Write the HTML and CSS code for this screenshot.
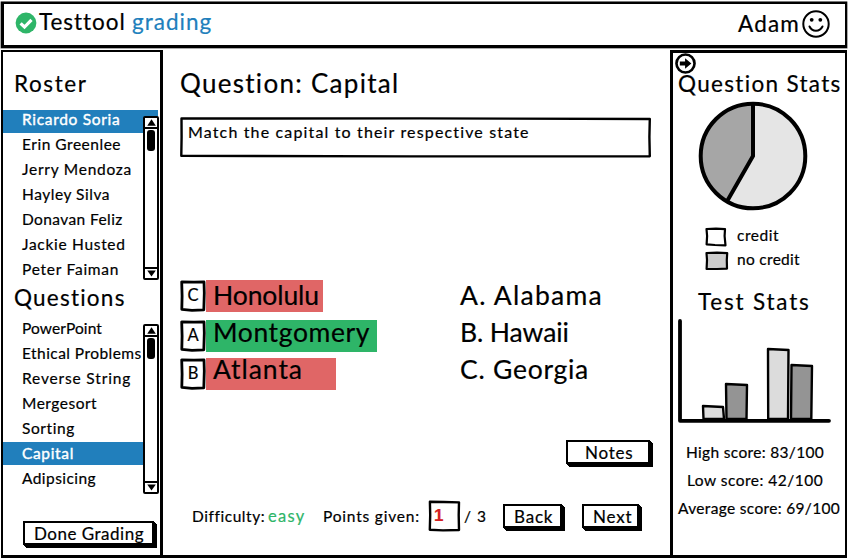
FILE: index.html
```html
<!DOCTYPE html>
<html lang="en">
<head>
<meta charset="utf-8">
<title>Testtool grading</title>
<link rel="stylesheet" href="styles.css">
</head>
<body>
<header class="topbar">
  <div class="brand">
    <svg class="check" viewBox="0 0 22 22"><circle cx="11" cy="11" r="10.4" fill="#2eb568"/><path d="M5.6 11.3 9.5 15l7-7.2" fill="none" stroke="#fff" stroke-width="3.2"/></svg>
    <span class="name">Testtool</span>
    <span class="mode">grading</span>
  </div>
  <div class="user">
    <span>Adam</span>
    <svg class="smiley" viewBox="0 0 28 28"><circle cx="14" cy="14" r="12.7" fill="none" stroke="#000" stroke-width="2"/><circle cx="9.7" cy="9.8" r="1.9"/><circle cx="18.3" cy="9.8" r="1.9"/><path d="M7.5 16.5c2.6 5.6 10.2 5.6 13 0" fill="none" stroke="#000" stroke-width="2" stroke-linecap="round"/></svg>
  </div>
</header>

<div class="columns">
  <aside class="sidebar">
    <h2 class="roster-title">Roster</h2>
    <div class="list roster">
      <ul>
        <li class="selected">Ricardo Soria</li>
        <li>Erin Greenlee</li>
        <li>Jerry Mendoza</li>
        <li>Hayley Silva</li>
        <li>Donavan Feliz</li>
        <li>Jackie Husted</li>
        <li>Peter Faiman</li>
      </ul>
      <div class="scrollbar">
        <svg class="arrow" viewBox="0 0 11 10"><path d="M5.5 1.5 10.3 8.6H.8z"/></svg>
        <div class="track"><div class="thumb"></div></div>
        <svg class="arrow down" viewBox="0 0 11 10"><path d="M5.5 8.4.8 1.8h9.5z"/></svg>
      </div>
    </div>
    <h2 class="questions-title">Questions</h2>
    <div class="list questions">
      <ul>
        <li>PowerPoint</li>
        <li>Ethical Problems</li>
        <li>Reverse String</li>
        <li>Mergesort</li>
        <li>Sorting</li>
        <li class="selected">Capital</li>
        <li>Adipsicing</li>
      </ul>
      <div class="scrollbar">
        <svg class="arrow" viewBox="0 0 11 10"><path d="M5.5 1.5 10.3 8.6H.8z"/></svg>
        <div class="track"><div class="thumb"></div></div>
        <svg class="arrow down" viewBox="0 0 11 10"><path d="M5.5 8.4.8 1.8h9.5z"/></svg>
      </div>
    </div>
    <button class="btn done">Done Grading</button>
  </aside>

  <main class="work">
    <h1>Question: Capital</h1>
    <div class="prompt">Match the capital to their respective state
      <svg class="sketch" viewBox="0 0 471 41" preserveAspectRatio="none"><path d="M1.5 1.5 240 1.4 469.8 2 469.4 20 469.8 39.3 230 39.4 1.3 38.8 1.6 20z"/></svg>
    </div>
    <div class="matching">
      <div class="answers">
        <div class="answer wrong honolulu">
          <span class="pick">C<svg class="sketch" viewBox="0 0 26 32"><path d="M1.7 1.8 14 2.2 24 2 24.3 13 23.8 29.8 12 30.3 1.8 29.4 2.1 16z"/></svg></span>
          <span class="city">Honolulu</span>
        </div>
        <div class="answer right montgomery">
          <span class="pick">A<svg class="sketch" viewBox="0 0 26 32"><path d="M1.7 1.8 14 2.2 24 2 24.3 13 23.8 29.8 12 30.3 1.8 29.4 2.1 16z"/></svg></span>
          <span class="city">Montgomery</span>
        </div>
        <div class="answer wrong atlanta">
          <span class="pick">B<svg class="sketch" viewBox="0 0 26 32"><path d="M1.7 1.8 14 2.2 24 2 24.3 13 23.8 29.8 12 30.3 1.8 29.4 2.1 16z"/></svg></span>
          <span class="city">Atlanta</span>
        </div>
      </div>
      <div class="states">
        <div>A. Alabama</div>
        <div>B. Hawaii</div>
        <div>C. Georgia</div>
      </div>
    </div>
    <button class="btn notes">Notes</button>
    <div class="controls">
      <span class="difficulty">Difficulty:</span>
      <span class="easy">easy</span>
      <span class="points">Points given:</span>
      <span class="score">1<svg class="sketch" viewBox="0 0 33 32"><path d="M1.9 1.8 16 2 31 2.4 30.7 15 31 30 15 30.4 1.8 29.8 2.2 15z"/></svg></span>
      <span class="max">/ 3</span>
      <button class="btn back">Back</button>
      <button class="btn next">Next</button>
    </div>
  </main>

  <aside class="stats">
    <svg class="expand" viewBox="0 0 20 20"><circle cx="10" cy="10" r="8.6" fill="none" stroke="#000" stroke-width="2.5"/><path d="M4.6 8.2h5V5L15.6 10 9.6 15v-3.2h-5z"/></svg>
    <h2 class="qstats">Question Stats</h2>
    <svg class="pie" viewBox="0 0 110 110">
      <circle cx="55" cy="55" r="52.3" fill="#e5e5e5"/>
      <path d="M55 55V2.7A52.3 52.3 0 0 0 28.8 100.3z" fill="#a6a6a6"/>
      <path d="M55 3V55L29.5 99.5" fill="none" stroke="#000" stroke-width="4"/>
      <circle cx="55" cy="55" r="52.3" fill="none" stroke="#000" stroke-width="4"/>
    </svg>
    <div class="legend">
      <svg viewBox="0 0 24 20"><path d="M1.5 2 11 1.6 20 2.2 19.6 9 20.5 18.4 10 18 1.6 17.4 2.1 9z" fill="#fff"/></svg><span class="credit">credit</span>
      <svg viewBox="0 0 24 20"><path d="M1.5 2 12 1.7 22.2 2.2 21.8 9 22 17.6 12 18 1.6 18 2 9z" fill="#ccc"/></svg><span class="nocredit">no credit</span>
    </div>
    <h2 class="tstats">Test Stats</h2>
    <svg class="bars" viewBox="0 0 154 105">
      <g stroke="#000" stroke-width="2.4" stroke-linejoin="round">
        <path d="M25 88 45 89 46 101H25.5z" fill="#dcdcdc"/>
        <path d="M48 66 69 67 68.5 101H48.5z" fill="#949494"/>
        <path d="M90 31 110.5 32 110 101H90.2z" fill="#dcdcdc"/>
        <path d="M113.5 47 134 48 133.3 101H113z" fill="#949494"/>
      </g>
      <path d="M2 3V102.8H151" fill="none" stroke="#000" stroke-width="3.8" stroke-linecap="round" stroke-linejoin="round"/>
    </svg>
    <div class="totals">
      <div class="high">High score: 83/100</div>
      <div class="low">Low score: 42/100</div>
      <div class="average">Average score: 69/100</div>
    </div>
  </aside>
</div>
</body>
</html>
```
FILE: styles.css
```css
* { box-sizing: border-box; }

body {
  margin: 0;
  padding: 2px 1px 0;
  height: 559px;
  overflow: hidden;
  background: #fff;
  color: #000;
  font: 15.5px/20px Lato, "Open Sans", sans-serif;
  font-kerning: normal;
  white-space: nowrap;
  -webkit-text-stroke: 0.2px currentColor;
}

h1, h2, ul { margin: 0; padding: 0; font-weight: 400; }
h2 { font-size: 22.5px; line-height: 28px; }
svg { display: block; flex: none; }

.topbar {
  height: 46px;
  border: 2px solid #000;
  border-width: 2px 2px 3px 3px;
  box-shadow: 0 -1px #777, 0 0 0 0.5px #555;
  display: flex;
  justify-content: space-between;
  font-size: 22.5px;
  line-height: 28px;
  padding: 4px 15px 0 11px;
}
.brand, .user { display: flex; }
.check { width: 22px; height: 22px; margin-top: 4px; }
.name { width: 95px; padding-left: 2px; letter-spacing: 0.95px; }
.mode { color: #217fbc; letter-spacing: 1px; }
.user { letter-spacing: 1.18px; padding-top: 1.5px; }
.user span { width: 64px; }
.smiley { width: 28px; height: 28px; }

.columns {
  margin-top: 2px;
  height: 508px;
  display: grid;
  grid-template-columns: 162px 508px 176px;
}

.sidebar {
  border: 2.5px solid #000;
  border-width: 2px 3px 3px 2px;
  padding-top: 18px;
}
.roster-title { padding-left: 11px; letter-spacing: 1.6px; }
.questions-title { padding-left: 11px; letter-spacing: 1.23px; margin-top: -1px; }

.list { position: relative; }
.list ul { list-style: none; }
.list li { height: 23px; margin-bottom: 2px; padding-left: 19px; }
.list .selected { background: #217fbc; color: #fff; -webkit-text-stroke-width: 0.4px; }
.roster { margin-top: 12px; }
.roster li { width: 155px; line-height: 18px; }
.roster li:nth-child(1) { letter-spacing: 0.68px; }
.roster li:nth-child(2) { letter-spacing: 0.52px; }
.roster li:nth-child(3) { letter-spacing: 0.75px; }
.roster li:nth-child(4) { letter-spacing: 0.54px; }
.roster li:nth-child(5) { letter-spacing: 0.4px; }
.roster li:nth-child(6) { letter-spacing: 0.7px; }
.roster li:nth-child(7) { letter-spacing: 0.75px; }
.questions { margin-top: 5px; }
.questions li { width: 141px; line-height: 22px; }
.questions li:nth-child(1) { letter-spacing: 0.12px; }
.questions li:nth-child(2) { letter-spacing: 0.45px; }
.questions li:nth-child(3) { letter-spacing: 0.84px; }
.questions li:nth-child(4) { letter-spacing: 0.5px; }
.questions li:nth-child(5) { letter-spacing: 0.6px; }
.questions li:nth-child(6) { letter-spacing: 0.65px; }
.questions li:nth-child(7) { letter-spacing: 0.43px; }

.scrollbar {
  position: absolute;
  left: 140px;
  top: 6px;
  width: 16px;
  height: 164px;
  display: flex;
  flex-direction: column;
  align-items: center;
  background: #fff;
  border: 2px solid #000;
  border-radius: 2px;
}
.questions .scrollbar { top: 7px; height: 170px; }
.arrow { width: 11px; height: 9px; }
.track {
  flex: 1;
  width: 100%;
  border: solid #000;
  border-width: 2px 0;
  padding: 1px 2px;
}
.thumb { width: 8px; height: 21px; background: #000; border-radius: 3px; }

.btn {
  display: block;
  border: 2px solid #000;
  background: #fff;
  color: inherit;
  box-shadow: 1px 1px #000, 2px 2px #000, 3px 3px #000;
  margin: 0;
  padding: 0 0 0 9px;
  height: 24px;
  font: 17px/22px Lato, "Open Sans", sans-serif;
  -webkit-text-stroke: inherit;
  text-align: left;
}
.done { width: 131px; margin: 31px 0 0 20px; letter-spacing: 0.5px; }

.work { border-bottom: 3px solid #000; padding: 17px 0 0 17px; }
h1 { font-size: 26px; line-height: 32px; letter-spacing: 1.29px; }
.sketch { position: absolute; inset: 0; width: 100%; height: 100%; fill: none; stroke: #000; stroke-width: 2.4; stroke-linejoin: round; }
.prompt {
  position: relative;
  width: 471px;
  height: 41px;
  margin-top: 18px;
  padding: 5px 0 0 8px;
  font-size: 16px;
  letter-spacing: 1.15px;
}
.matching { display: flex; margin-top: 122px; }
.answers { width: 280px; display: flex; flex-direction: column; }
.answer { display: flex; height: 32px; font-size: 26.5px; }
.pick {
  position: relative;
  width: 26px;
  height: 32px;
  text-align: center;
  font-size: 16.5px;
  line-height: 30px;
}
.pick .sketch { stroke-width: 2.8; }
.city { padding-left: 7px; }
.wrong .city { background: #e06666; }
.right .city { background: #2eb568; }
.honolulu .city { width: 117px; line-height: 31px; letter-spacing: -0.1px; }
.montgomery { margin-top: 8px; }
.montgomery .city { width: 171px; line-height: 24px; letter-spacing: 0.6px; }
.atlanta { margin-top: 6px; }
.atlanta .city { width: 130px; line-height: 23px; letter-spacing: 0.95px; }
.states { margin-top: -3px; font-size: 26.5px; line-height: 37px; }
.states div:nth-child(1) { letter-spacing: 1.26px; }
.states div:nth-child(2) { letter-spacing: -0.1px; }
.states div:nth-child(3) { letter-spacing: 0.74px; }

.notes { width: 84px; margin: 50px 0 0 386px; padding-left: 17px; letter-spacing: 0.75px; }
.controls { display: flex; align-items: center; margin-top: 36px; padding-left: 12px; height: 32px; }
.difficulty { width: 76px; letter-spacing: 0.55px; }
.easy { width: 55px; color: #2eb568; font-size: 16.5px; letter-spacing: 1.3px; }
.points { width: 105px; letter-spacing: 0.8px; }
.score {
  position: relative;
  width: 33px;
  height: 32px;
  padding-left: 6px;
  color: #d42020;
  font: bold 17px/31px "Liberation Sans", sans-serif;
}
.max { width: 42px; padding-left: 3px; letter-spacing: 1px; }
.back { width: 59px; letter-spacing: 0.8px; }
.next { width: 57px; margin-left: 20px; letter-spacing: 0.8px; }

.stats {
  border: 2.5px solid #000;
  border-width: 3px 2px 3px 3px;
  padding: 0 0 0 2px;
  margin-left: -1px;
}
.expand { width: 21px; height: 21px; }
.qstats { margin: -4px 0 0 3px; letter-spacing: 1.32px; }
.pie { width: 110px; height: 110px; margin: 3px 0 0 22.5px; }
.legend {
  display: grid;
  grid-template-columns: 32px 1fr;
  row-gap: 4px;
  margin: 16px 0 0 30px;
}
.legend svg { width: 24px; height: 20px; stroke: #000; stroke-width: 2.2; stroke-linejoin: round; }
.legend span { position: relative; top: -2px; }
.credit { letter-spacing: 0.55px; }
.nocredit { letter-spacing: 0.3px; }
.tstats { margin: 17px 0 0 23px; letter-spacing: 1.8px; }
.bars { width: 154px; height: 105px; margin: 2px 0 0 3px; }
.totals { margin-top: 15px; line-height: 28px; }
.high { padding-left: 11px; letter-spacing: 0.33px; }
.low { padding-left: 12px; letter-spacing: 0.48px; }
.average { padding-left: 3px; letter-spacing: 0.33px; }
```
